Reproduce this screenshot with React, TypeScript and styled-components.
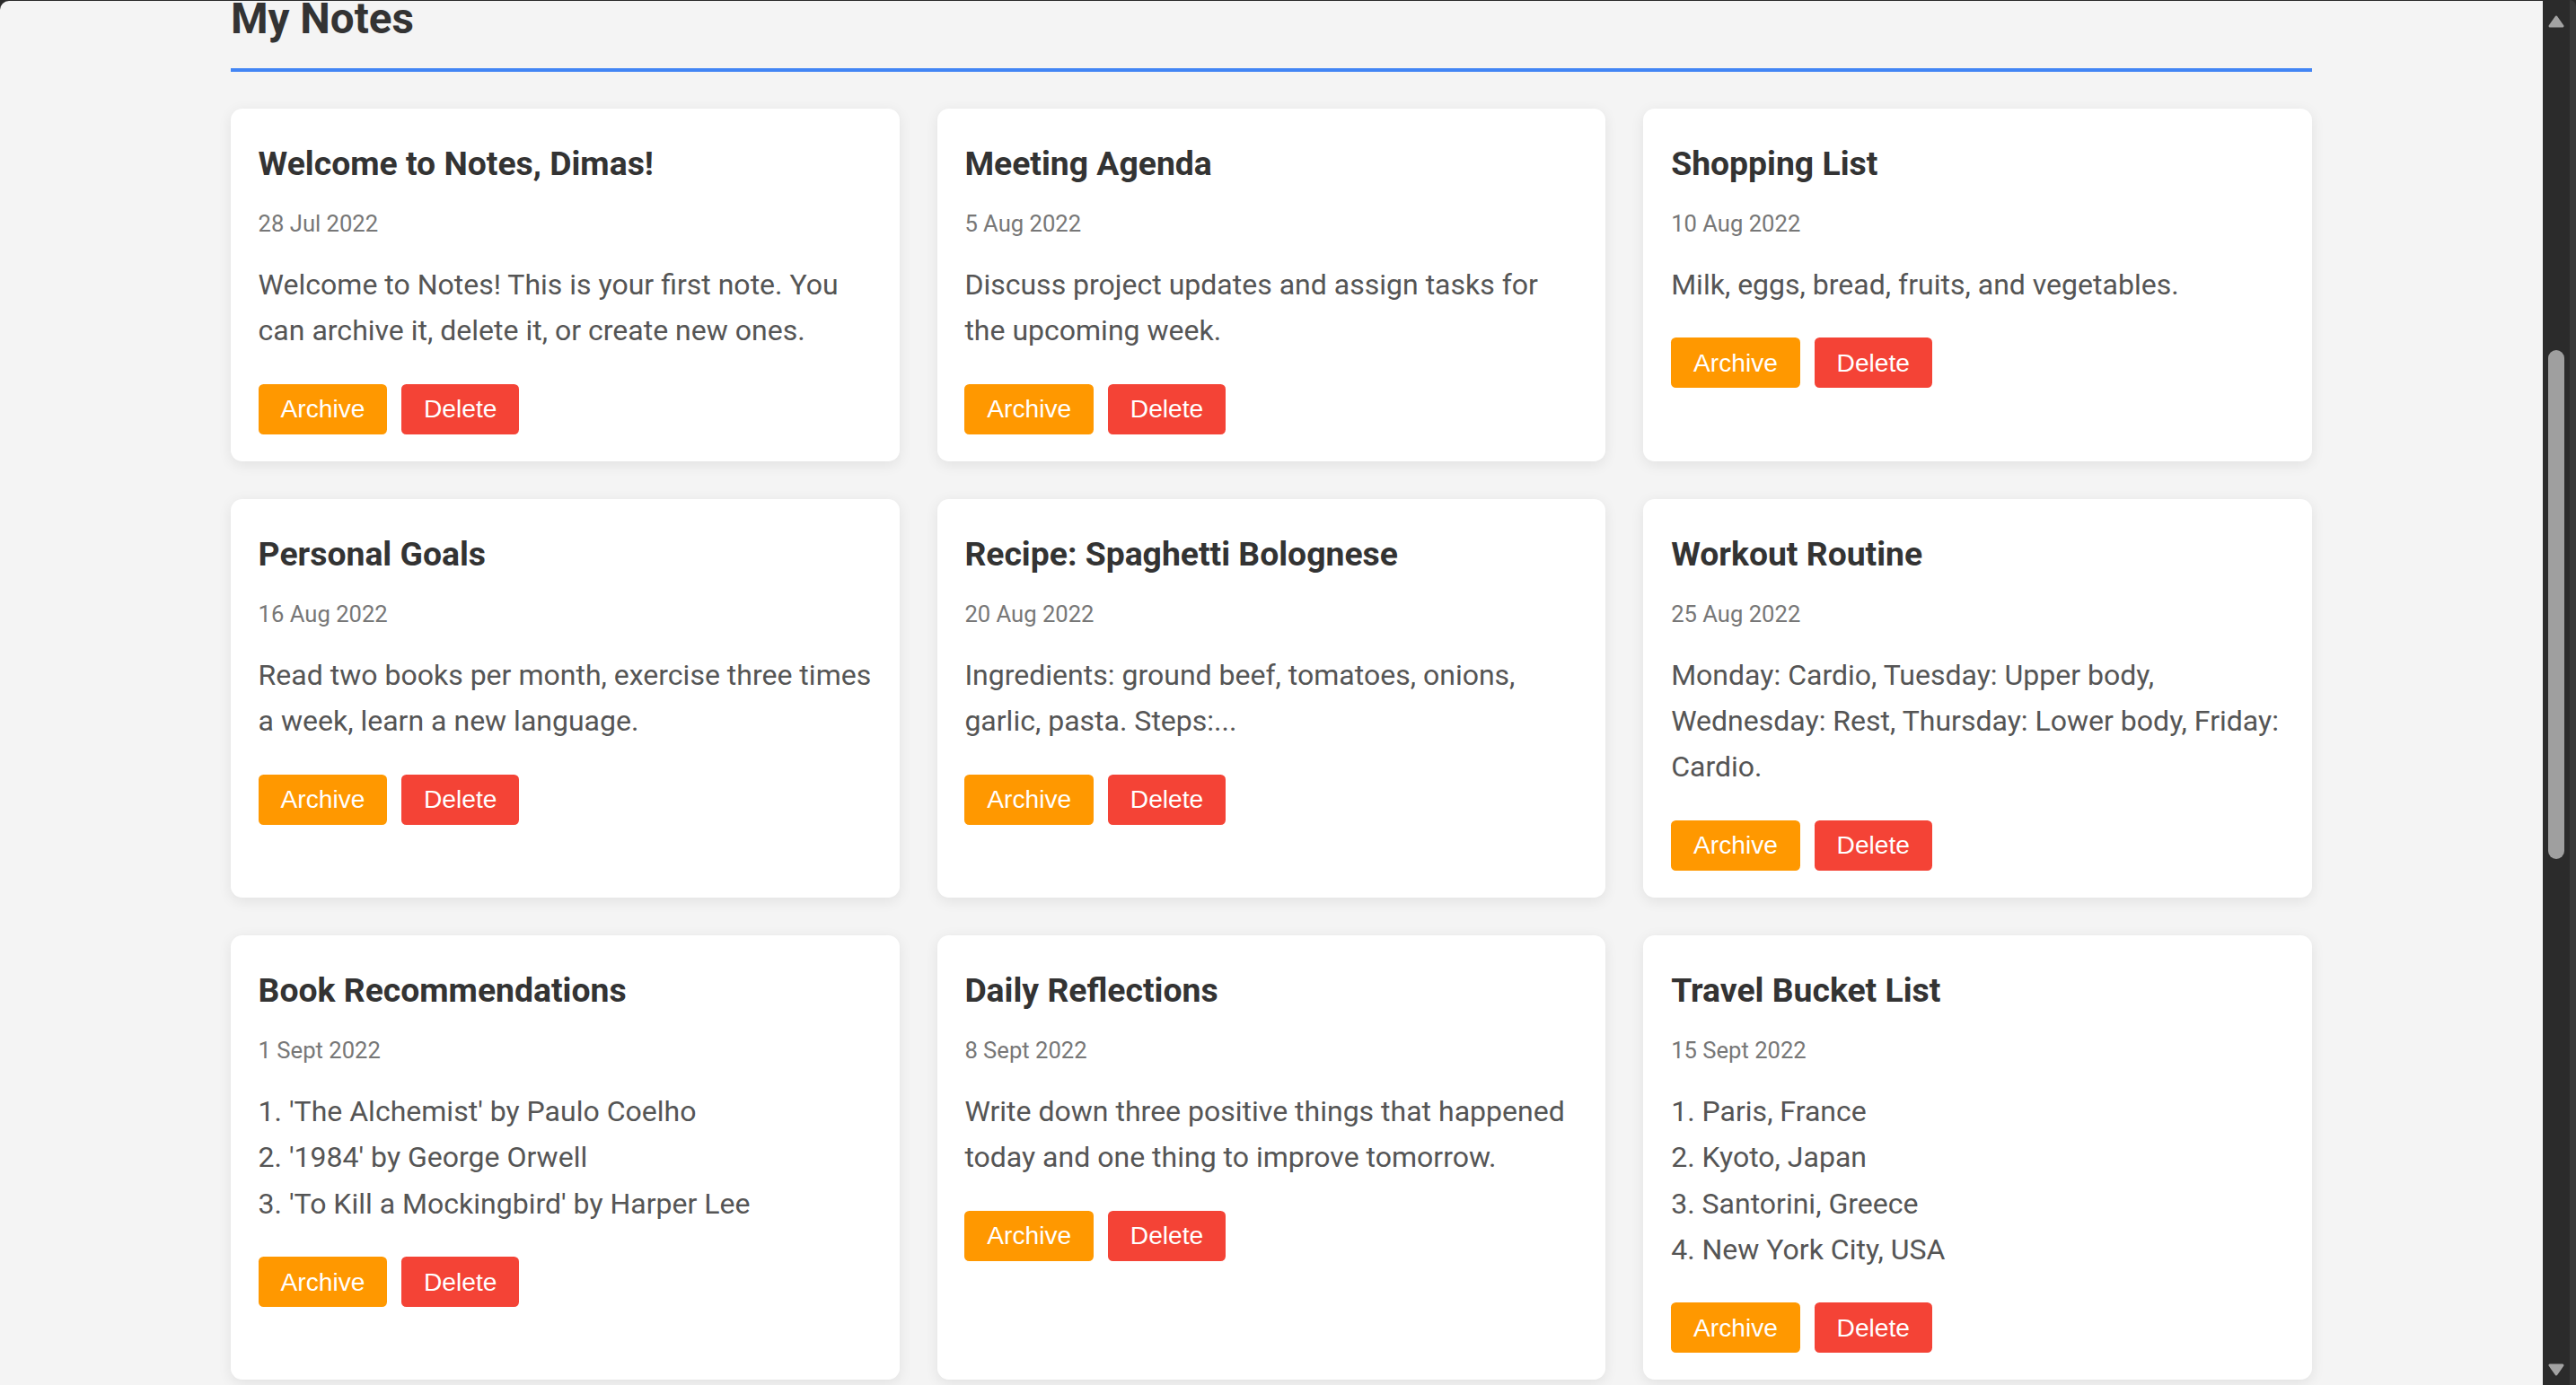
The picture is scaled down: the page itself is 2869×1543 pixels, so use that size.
import React, { useLayoutEffect, useRef } from "react";
import styled, { createGlobalStyle } from "styled-components";

const SCALE = 2869 / 1568;

type Note = { id: number; title: string; date: string; body: string };

const notes: Note[] = [
  {
    id: 1,
    title: "Welcome to Notes, Dimas!",
    date: "28 Jul 2022",
    body: "Welcome to Notes! This is your first note. You can archive it, delete it, or create new ones.",
  },
  {
    id: 2,
    title: "Meeting Agenda",
    date: "5 Aug 2022",
    body: "Discuss project updates and assign tasks for the upcoming week.",
  },
  {
    id: 3,
    title: "Shopping List",
    date: "10 Aug 2022",
    body: "Milk, eggs, bread, fruits, and vegetables.",
  },
  {
    id: 4,
    title: "Personal Goals",
    date: "16 Aug 2022",
    body: "Read two books per month, exercise three times a week, learn a new language.",
  },
  {
    id: 5,
    title: "Recipe: Spaghetti Bolognese",
    date: "20 Aug 2022",
    body: "Ingredients: ground beef, tomatoes, onions, garlic, pasta. Steps:...",
  },
  {
    id: 6,
    title: "Workout Routine",
    date: "25 Aug 2022",
    body: "Monday: Cardio, Tuesday: Upper body, Wednesday: Rest, Thursday: Lower body, Friday: Cardio.",
  },
  {
    id: 7,
    title: "Book Recommendations",
    date: "1 Sept 2022",
    body: "1. 'The Alchemist' by Paulo Coelho\n2. '1984' by George Orwell\n3. 'To Kill a Mockingbird' by Harper Lee",
  },
  {
    id: 8,
    title: "Daily Reflections",
    date: "8 Sept 2022",
    body: "Write down three positive things that happened today and one thing to improve tomorrow.",
  },
  {
    id: 9,
    title: "Travel Bucket List",
    date: "15 Sept 2022",
    body: "1. Paris, France\n2. Kyoto, Japan\n3. Santorini, Greece\n4. New York City, USA",
  },
];

const GlobalStyle = createGlobalStyle`
  html, body {
    margin: 0;
    padding: 0;
    height: 100%;
    overflow: hidden;
    background: #2b2b2b;
  }
  #root {
    height: 100%;
  }
  *, *::before, *::after {
    box-sizing: border-box;
  }
`;

const Window = styled.div`
  display: flex;
  width: 100vw;
  height: 100vh;
  background: #2b2b2b;
`;

const Viewport = styled.main`
  flex: 1;
  margin-top: 1px;
  background: #f4f4f4;
  border-top-left-radius: 10px;
  overflow: hidden;
`;

const Page = styled.div`
  zoom: ${SCALE};
  font-family: Roboto, "Liberation Sans", sans-serif;
  padding: 20px 0 40px;
`;

const Container = styled.section`
  max-width: 1267px;
  margin: 0 auto;
`;

const Heading = styled.h2`
  margin: 0 0 22px;
  padding-bottom: 14.6px;
  border-bottom: 2.2px solid #4285f4;
  font-size: 26px;
  line-height: 1.2;
  font-weight: 700;
  color: #333;
`;

const Grid = styled.div`
  display: grid;
  grid-template-columns: repeat(3, 1fr);
  gap: 23px;
`;

const Card = styled.article`
  background: #fff;
  border-radius: 7px;
  box-shadow: 0 2px 8px rgba(0, 0, 0, 0.08);
  padding: 17.6px 16.8px 16.3px;
`;

const NoteTitle = styled.h3`
  margin: 0 0 8.5px;
  font-size: 20.4px;
  font-weight: 700;
  line-height: 32.64px;
  color: #333;
`;

const NoteDate = styled.p`
  margin: 0 0 11.1px;
  font-size: 14px;
  line-height: 23.8px;
  color: #777;
`;

const NoteBody = styled.p`
  margin: 0 0 18.2px;
  font-size: 17.5px;
  line-height: 28px;
  color: #555;
  white-space: pre-line;
`;

const Actions = styled.div`
  display: flex;
  gap: 8.7px;
`;

const ActionButton = styled.button<{ $variant: "archive" | "delete" }>`
  height: 30.6px;
  padding: 0 13.6px;
  border: none;
  border-radius: 3px;
  font-family: "Liberation Sans", Arial, sans-serif;
  font-size: 15.4px;
  color: #fff;
  background: ${(p) => (p.$variant === "archive" ? "#ff9800" : "#f44336")};
  cursor: pointer;
`;

const Scrollbar = styled.div`
  width: 30px;
  display: flex;
  flex-direction: column;
  align-items: center;
  padding: 17px 0 10px;
  background: #2b2b2b;
`;

const Track = styled.div`
  flex: 1;
  width: 18px;
  display: flex;
  flex-direction: column;
`;

const Thumb = styled.div<{ $offset: number; $size: number }>`
  margin-top: ${(p) => p.$offset}px;
  height: ${(p) => p.$size}px;
  width: 18px;
  border-radius: 9px;
  background: #9f9f9f;
`;

const Edge = styled.div`
  width: 7px;
  background: #3a3a3a;
  border-top-right-radius: 8px;
`;

const Arrow = ({ down }: { down?: boolean }) => (
  <svg width="18" height="14" viewBox="0 0 18 14" aria-hidden="true">
    <polygon
      points={down ? "2,2 16,2 9,12" : "9,2 16,12 2,12"}
      fill="#a3a3a3"
      stroke="#a3a3a3"
      strokeWidth="3"
      strokeLinejoin="round"
    />
  </svg>
);

const NoteCard = ({ note }: { note: Note }) => (
  <Card>
    <NoteTitle>{note.title}</NoteTitle>
    <NoteDate>{note.date}</NoteDate>
    <NoteBody>{note.body}</NoteBody>
    <Actions>
      <ActionButton $variant="archive">Archive</ActionButton>
      <ActionButton $variant="delete">Delete</ActionButton>
    </Actions>
  </Card>
);

export default function App() {
  const viewportRef = useRef<HTMLElement>(null);

  useLayoutEffect(() => {
    if (viewportRef.current) viewportRef.current.scrollTop = 45;
  }, []);

  return (
    <>
      <GlobalStyle />
      <Window>
        <Viewport ref={viewportRef}>
          <Page>
            <Container>
              <Heading>My Notes</Heading>
              <Grid>
                {notes.map((n) => (
                  <NoteCard key={n.id} note={n} />
                ))}
              </Grid>
            </Container>
          </Page>
        </Viewport>
        <Scrollbar>
          <Arrow />
          <Track>
            <Thumb $offset={359} $size={567} />
          </Track>
          <Arrow down />
        </Scrollbar>
        <Edge />
      </Window>
    </>
  );
}
